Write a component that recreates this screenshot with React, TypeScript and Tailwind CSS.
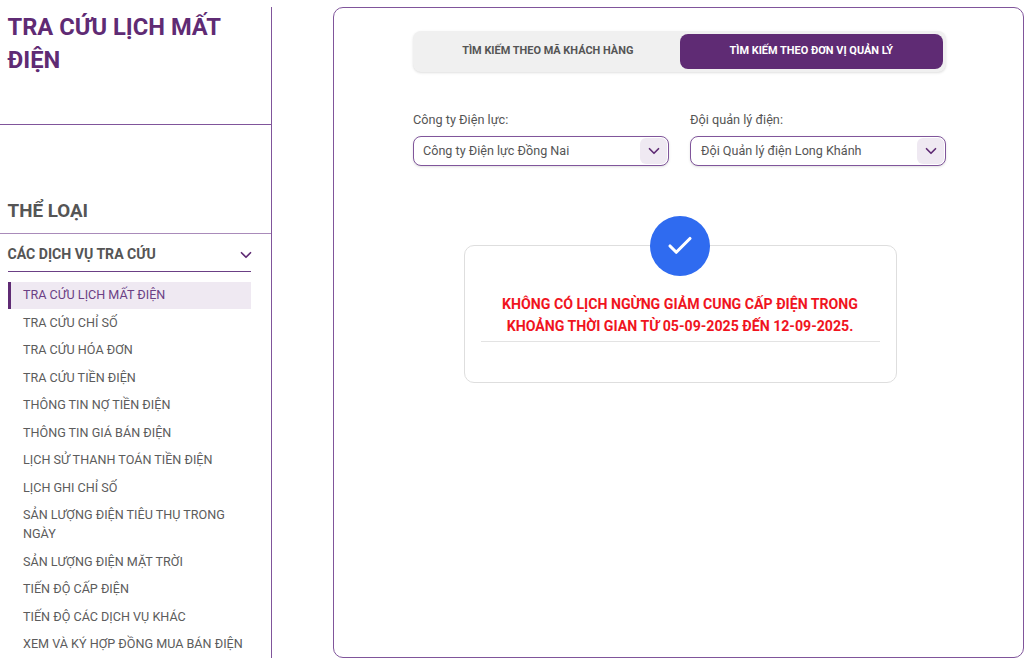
import React from 'react';
import { ChevronDown, Check } from 'lucide-react';

const MENU_ITEMS = [
  'TRA CỨU CHỈ SỐ',
  'TRA CỨU HÓA ĐƠN',
  'TRA CỨU TIỀN ĐIỆN',
  'THÔNG TIN NỢ TIỀN ĐIỆN',
  'THÔNG TIN GIÁ BÁN ĐIỆN',
  'LỊCH SỬ THANH TOÁN TIỀN ĐIỆN',
  'LỊCH GHI CHỈ SỐ',
  'SẢN LƯỢNG ĐIỆN TIÊU THỤ TRONG NGÀY',
  'SẢN LƯỢNG ĐIỆN MẶT TRỜI',
  'TIẾN ĐỘ CẤP ĐIỆN',
  'TIẾN ĐỘ CÁC DỊCH VỤ KHÁC',
  'XEM VÀ KÝ HỢP ĐỒNG MUA BÁN ĐIỆN',
];

const SelectBox = ({ label, value, pad }: { label: string; value: string; pad: string }) => (
  <div className="w-[256px]">
    <div className="text-[12.7px] leading-[20px] text-[#555555] mb-[6px]">{label}</div>
    <div className="h-[30px] flex items-center justify-between border border-[#80559b] rounded-[8px] bg-white shadow-sm pr-[1px]">
      <span className={`text-[12.6px] text-[#555555] ${pad}`}>{value}</span>
      <span className="w-[27px] h-[26px] rounded-[6px] bg-[#efe9f2] flex items-center justify-center">
        <ChevronDown className="w-[18px] h-[18px] text-[#5f2b74]" strokeWidth={2.25} />
      </span>
    </div>
  </div>
);

export default function App() {
  return (
    <div className="h-[662px] w-[1024px] overflow-hidden bg-white pt-[7px] flex font-['Roboto',sans-serif]">
      {/* SIDEBAR */}
      <aside className="w-[272px] h-[651px] border-r border-[#80559b] overflow-hidden shrink-0">
        <div className="h-[118px] border-b border-[#80559b] pl-[8px] pt-[4px]">
          <h1 className="text-[23.7px] leading-[33px] font-bold text-[#5f2b74] w-[240px] -ml-[0.5px]">TRA CỨU LỊCH MẤT ĐIỆN</h1>
        </div>
        <div className="mt-[72px] h-[37px] border-b border-[#a98bba] pl-[7.5px] text-[18.8px] leading-[28px] font-bold text-[#555555]">
          THỂ LOẠI
        </div>
        <div className="pl-[8px] w-[251px]">
          <div className="h-[38px] border-b border-[#6b3f85] flex items-center justify-between pt-[4px]">
            <span className="text-[14.1px] font-bold text-[#555555] -ml-[0.5px]">CÁC DỊCH VỤ TRA CỨU</span>
            <ChevronDown className="w-[18px] h-[18px] text-[#5f2b74] mr-[-4px]" strokeWidth={2.25} />
          </div>
          <ul className="mt-[10px] text-[12.6px] leading-[19px] text-[#5c5c5c]">
            <li className="bg-[#efe9f2] border-l-[3px] border-[#5f2b74] pl-[12px] pt-[3px] pb-[4.5px] text-[#6b3f85]">TRA CỨU LỊCH MẤT ĐIỆN</li>
            {MENU_ITEMS.map((item) => (
              <li key={item} className="pl-[15px] pt-[3.5px] pb-[4.5px] mt-[0.5px] pr-[2px]">{item}</li>
            ))}
          </ul>
        </div>
      </aside>

      {/* MAIN CARD */}
      <main className="ml-[61px] w-[691px] h-[651px] border border-[#80559b] rounded-[10px] pl-[79px] pt-[23px]">
        <div className="w-[533px]">
          <div className="h-[41px] rounded-[8px] bg-[#f0f0f0] shadow-sm flex items-center p-[3px]">
            <div className="w-[264px] text-center text-[10.95px] font-bold text-[#555555]">TÌM KIẾM THEO MÃ KHÁCH HÀNG</div>
            <div className="w-[264px] h-[35px] rounded-[8px] bg-[#5f2b74] flex items-center justify-center text-[10.95px] font-bold text-white">
              TÌM KIẾM THEO ĐƠN VỊ QUẢN LÝ
            </div>
          </div>
          <div className="flex justify-between mt-[38px]">
            <SelectBox label="Công ty Điện lực:" value="Công ty Điện lực Đồng Nai" pad="pl-[9px]" />
            <SelectBox label="Đội quản lý điện:" value="Đội Quản lý điện Long Khánh" pad="pl-[10px]" />
          </div>
        </div>

        <div className="relative mt-[79px] ml-[50.5px] w-[433px] h-[138px] border border-[#dedede] rounded-[10px] px-[16px] pt-[47px]">
          <div className="absolute left-[185px] top-[-30px] w-[60px] h-[60px] rounded-full bg-[#2f6bf0] flex items-center justify-center">
            <Check className="w-[30px] h-[30px] text-white" strokeWidth={2.5} />
          </div>
          <p className="text-[14.15px] leading-[22px] font-bold text-center text-[#f0141e] pb-[4px] border-b border-[#e3e3e3]">
            KHÔNG CÓ LỊCH NGỪNG GIẢM CUNG CẤP ĐIỆN TRONG KHOẢNG THỜI GIAN TỪ 05-09-2025 ĐẾN 12-09-2025.
          </p>
        </div>
      </main>
    </div>
  );
}
